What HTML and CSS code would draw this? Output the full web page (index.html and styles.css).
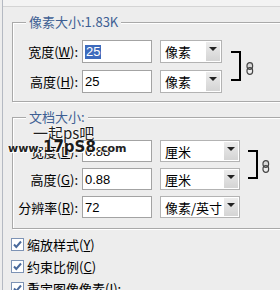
FILE: index.html
```html
<!DOCTYPE html>
<html lang="zh-CN">
<head>
    <meta charset="UTF-8">
    <title>图像大小</title>
    <link rel="stylesheet" href="styles.css">
</head>
<body>
    <div class="dialog">
        <div class="top-strip"></div>

        <!-- Pixel dimensions -->
        <fieldset class="group group-pixel">
            <legend>像素大小:1.83K</legend>
            <div class="linked">
                <div class="rows">
                    <div class="row">
                        <label class="label">宽度(<u>W</u>):</label>
                        <div class="field"><span class="selected">25</span></div>
                        <div class="select"><span>像素</span><i class="arrow"></i></div>
                    </div>
                    <div class="row">
                        <label class="label">高度(<u>H</u>):</label>
                        <div class="field">25</div>
                        <div class="select"><span>像素</span><i class="arrow"></i></div>
                    </div>
                </div>
                <div class="bracket"></div>
                <svg class="chain" width="8" height="13" viewBox="0 0 8 13">
                    <rect x="1" y="0.7" width="5.6" height="6.6" rx="2.8" fill="#d8d8d8" stroke="#444" stroke-width="1.2"/>
                    <rect x="1" y="5.7" width="5.6" height="6.6" rx="2.8" fill="none" stroke="#444" stroke-width="1.2"/>
                </svg>
            </div>
        </fieldset>

        <!-- Document size -->
        <fieldset class="group group-doc">
            <legend>文档大小:</legend>
            <div class="linked">
                <div class="rows">
                    <div class="row">
                        <label class="label">宽度(<u>D</u>):</label>
                        <div class="field">0.88</div>
                        <div class="select"><span>厘米</span><i class="arrow"></i></div>
                    </div>
                    <div class="row">
                        <label class="label">高度(<u>G</u>):</label>
                        <div class="field">0.88</div>
                        <div class="select"><span>厘米</span><i class="arrow"></i></div>
                    </div>
                </div>
                <div class="bracket"></div>
                <svg class="chain" width="8" height="13" viewBox="0 0 8 13">
                    <rect x="1" y="0.7" width="5.6" height="6.6" rx="2.8" fill="#d8d8d8" stroke="#444" stroke-width="1.2"/>
                    <rect x="1" y="5.7" width="5.6" height="6.6" rx="2.8" fill="none" stroke="#444" stroke-width="1.2"/>
                </svg>
            </div>
            <div class="row">
                <label class="label">分辨率(<u>R</u>):</label>
                <div class="field">72</div>
                <div class="select"><span>像素/英寸</span><i class="arrow"></i></div>
            </div>
        </fieldset>

        <!-- Options -->
        <div class="checks">
            <div class="check"><span class="box"><svg width="11" height="11" viewBox="0 0 11 11"><path d="M2 5.5 L4.3 8 L9 2.5" fill="none" stroke="#4a6a9c" stroke-width="2"/></svg></span>缩放样式(<u>Y</u>)</div>
            <div class="check"><span class="box"><svg width="11" height="11" viewBox="0 0 11 11"><path d="M2 5.5 L4.3 8 L9 2.5" fill="none" stroke="#4a6a9c" stroke-width="2"/></svg></span>约束比例(<u>C</u>)</div>
            <div class="check"><span class="box"><svg width="11" height="11" viewBox="0 0 11 11"><path d="M2 5.5 L4.3 8 L9 2.5" fill="none" stroke="#4a6a9c" stroke-width="2"/></svg></span>重定图像像素(<u>I</u>):</div>
        </div>

        <!-- Site watermark over the form -->
        <div class="watermark">
            <div class="wm-title">一起ps吧</div>
            <div class="wm-url"><span class="wm-small">www.</span><span class="wm-big">17pS8</span><span class="wm-small">.com</span></div>
        </div>
    </div>
</body>
</html>
```

FILE: styles.css
```css
/* General */
body {
    margin: 0;
    background: #ededed;
    font-family: "Noto Sans CJK SC", "Liberation Sans", sans-serif;
    font-size: 13px;
    color: #000;
    overflow: hidden;
}

.dialog {
    position: relative;
    width: 280px;
    height: 290px;
    border-left: 1px solid #b4b9c2;
    margin-left: 2px;
    box-sizing: border-box;
}

.top-strip {
    height: 6px;
    background: #f3f3f3;
    border-bottom: 1px solid #d4d4d4;
}

u {
    text-decoration: underline;
    text-underline-offset: 1px;
}

/* Group boxes */
.group {
    margin: 0 1px 0 9px;
    padding: 0;
    border: 1px solid #a9a9a9;
    box-shadow: inset 1px 1px 0 #fff, 1px 1px 0 #fff;
}

.group legend {
    margin-left: 13px;
    padding: 0 3px;
    height: 14px;
    line-height: 14px;
    color: #3e5f93;
    background: #ededed;
}

.group-pixel {
    margin-top: 8px;
    padding: 11px 0 8px;
}

.group-pixel .rows {
    gap: 7px;
}

.group-pixel .row {
    height: 23px;
}

.group-pixel .select {
    width: 62px;
}

.group-pixel .bracket {
    margin: 11px 0 0 9px;
    height: 26px;
}

.group-pixel .chain {
    margin: 22px 0 0 5px;
}

.group-doc {
    margin-top: 8px;
    padding: 16px 0 10px;
}

.group-doc .rows {
    gap: 6px;
}

.group-doc .linked {
    margin-bottom: 6px;
}

.group-doc .row {
    height: 22px;
}

.group-doc .select {
    width: 80px;
}

.group-doc .bracket {
    margin: 10px 0 0 8px;
    height: 25px;
}

.group-doc .chain {
    margin: 20px 0 0 4px;
}

/* Rows */
.linked {
    display: flex;
    align-items: flex-start;
}

.rows {
    display: flex;
    flex-direction: column;
}

.row {
    display: flex;
    align-items: center;
}

.label {
    width: 65px;
    margin-right: 4px;
    text-align: right;
    white-space: nowrap;
}

.field {
    width: 70px;
    height: 100%;
    box-sizing: border-box;
    border: 1px solid #a3a3a3;
    background: #fff;
    padding-left: 2px;
    display: flex;
    align-items: center;
    font-family: "Liberation Sans", sans-serif;
    font-size: 13px;
}

.selected {
    background: #3d6bbd;
    color: #fff;
    padding: 0 1px;
    line-height: 14px;
}

.select {
    margin-left: 8px;
    height: 100%;
    box-sizing: border-box;
    border: 1px solid #b3b3b3;
    background: #fff;
    display: flex;
    align-items: stretch;
}

.select span {
    flex: 1;
    padding-left: 4px;
    display: flex;
    align-items: center;
    white-space: nowrap;
}

.arrow {
    width: 14px;
    margin: 1px;
    background: linear-gradient(#ececec, #d4d4d4);
    position: relative;
}

.arrow::after {
    content: "";
    position: absolute;
    left: 3px;
    top: 5px;
    border-left: 4px solid transparent;
    border-right: 4px solid transparent;
    border-top: 4px solid #222;
}

.bracket {
    width: 8px;
    border: 2px solid #000;
    border-left: none;
}

/* Checkboxes */
.checks {
    padding: 4px 0 0 8px;
}

.check {
    height: 22px;
    display: flex;
    align-items: center;
    white-space: nowrap;
}

.box {
    width: 13px;
    height: 13px;
    box-sizing: border-box;
    border: 1px solid #7d93b5;
    background: #fff;
    margin-right: 3px;
    display: flex;
    align-items: center;
    justify-content: center;
}

/* Watermark */
.watermark {
    position: absolute;
    left: 5px;
    top: 125px;
}

.wm-title {
    margin-left: 25px;
    font-size: 15px;
    line-height: 15px;
    color: #1e1e1e;
    text-shadow: 0 0 2px #fff, 0 0 2px #fff;
}

.wm-url {
    display: flex;
    align-items: baseline;
    font-family: "DejaVu Sans", sans-serif;
    font-weight: bold;
    line-height: 14px;
    color: #1a1a1a;
    text-shadow: 1px 1px 0 #fff, -1px 0 1px #fff;
}

.wm-small {
    font-size: 11px;
    color: #222;
}

.wm-big {
    font-size: 15px;
    margin: 0 1px;
}
```
